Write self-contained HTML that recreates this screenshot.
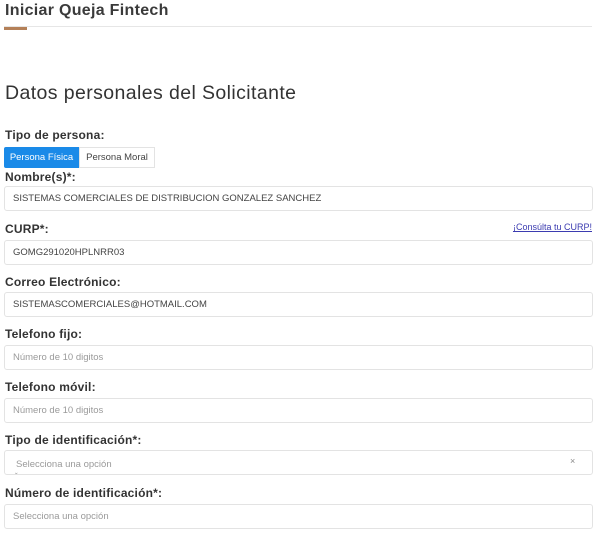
<!DOCTYPE html>
<html><head><meta charset="utf-8"><style>
*{box-sizing:border-box;margin:0;padding:0}
body{width:600px;height:543px;background:#fff;font-family:"Liberation Sans",sans-serif;color:#333;position:relative;overflow:hidden}
.a{position:absolute}
.t{left:5px;top:2px;font-size:16px;font-weight:bold;color:#3a3a3a;letter-spacing:0.3px}
.hr{left:4px;top:26px;width:588px;height:1px;background:#e6e6e6}
.acc{left:4px;top:27px;width:23px;height:3px;background:#b48058}
.h2{left:5px;top:82px;font-size:19.5px;color:#333;letter-spacing:0.4px}
.lb{left:5px;font-size:12px;font-weight:bold;color:#333;letter-spacing:0.2px}
.in{left:4px;width:589px;height:25px;border:1px solid #e3e3e3;border-radius:3px;font-size:9.5px;color:#444;padding:0 0 0 8px;line-height:24px}
.ph{color:#9a9a9a}
.b1{left:4px;top:147px;width:75px;height:21px;background:#1a8ae8;color:#fff;font-size:9.5px;line-height:21px;text-align:center;border-radius:2px 0 0 2px}
.b2{left:79px;top:147px;width:76px;height:21px;border:1px solid #e3e3e3;color:#444;font-size:9.5px;line-height:19px;text-align:center}
.lnk{right:8px;top:222px;font-size:9px;color:#3b3bb0;text-decoration:underline}
</style></head><body>
<div class="a t">Iniciar Queja Fintech</div>
<div class="a hr"></div><div class="a acc"></div>
<div class="a h2">Datos personales del Solicitante</div>
<div class="a lb" style="top:128px">Tipo de persona:</div>
<div class="a b1">Persona Física</div><div class="a b2">Persona Moral</div>
<div class="a lb" style="top:170px">Nombre(s)*:</div>
<div class="a in" style="top:186px">SISTEMAS COMERCIALES DE DISTRIBUCION GONZALEZ SANCHEZ</div>
<div class="a lb" style="top:222px">CURP*:</div>
<div class="a lnk">¡Consúlta tu CURP!</div>
<div class="a in" style="top:240px">GOMG291020HPLNRR03</div>
<div class="a lb" style="top:275px">Correo Electrónico:</div>
<div class="a in" style="top:292px">SISTEMASCOMERCIALES@HOTMAIL.COM</div>
<div class="a lb" style="top:327px">Telefono fijo:</div>
<div class="a in ph" style="top:345px">Número de 10 digitos</div>
<div class="a lb" style="top:380px">Telefono móvil:</div>
<div class="a in ph" style="top:398px">Número de 10 digitos</div>
<div class="a lb" style="top:433px">Tipo de identificación*:</div>
<div class="a in ph" style="top:450px;padding-left:11px;line-height:28px">Selecciona una opción</div>
<div class="a" style="left:570px;top:456px;font-size:9px;color:#888">×</div>
<div class="a" style="left:15px;top:472px;font-size:8px;color:#999">ˇ</div>
<div class="a lb" style="top:486px">Número de identificación*:</div>
<div class="a in ph" style="top:504px">Selecciona una opción</div>
</body></html>
